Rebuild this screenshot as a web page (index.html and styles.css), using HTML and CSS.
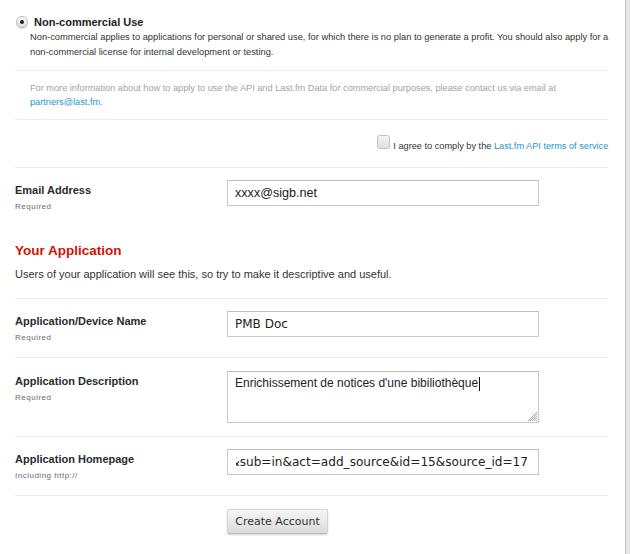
FILE: index.html
```html
<!DOCTYPE html>
<html>
<head>
<meta charset="utf-8">
<title>Create API account</title>
<link rel="stylesheet" href="styles.css">
</head>
<body>
<div class="page">
  <main class="main">
    <section class="block license">
      <div class="radio-row">
        <span class="radio"><span class="radio-dot"></span></span>
        <span class="radio-label">Non-commercial Use</span>
      </div>
      <p class="license-desc">Non-commercial applies to applications for personal or shared use, for which there is no plan to generate a profit. You should also apply for a<br>non-commercial license for internal development or testing.</p>
    </section>

    <section class="block info">
      <p>For more information about how to apply to use the API and Last.fm Data for commercial purposes, please contact us via email at<br><a href="#" class="link">partners@last.fm</a>.</p>
    </section>

    <section class="block agree">
      <span class="checkbox"></span>
      <span class="agree-text">I agree to comply by the <a href="#" class="link">Last.fm API terms of service</a></span>
    </section>

    <section class="row">
      <div class="label-col">
        <div class="label">Email Address</div>
        <div class="hint">Required</div>
      </div>
      <div class="field-col">
        <input class="input input-email" type="text" value="xxxx@sigb.net">
      </div>
    </section>

    <section class="app-head">
      <h2 class="app-title">Your Application</h2>
      <p class="app-desc">Users of your application will see this, so try to make it descriptive and useful.</p>
    </section>

    <section class="row bordered">
      <div class="label-col">
        <div class="label">Application/Device Name</div>
        <div class="hint">Required</div>
      </div>
      <div class="field-col">
        <input class="input" type="text" value="PMB Doc">
      </div>
    </section>

    <section class="row bordered textarea-row">
      <div class="label-col">
        <div class="label">Application Description</div>
        <div class="hint">Required</div>
      </div>
      <div class="field-col">
        <div class="textarea-wrap">
          <textarea class="textarea">Enrichissement de notices d'une bibiliothèque</textarea>
          <span class="caret"></span>
          <svg class="grip" width="9" height="9" viewBox="0 0 9 9">
            <g fill="#a8a8a8">
              <rect x="8" y="0" width="1" height="1"/>
              <rect x="7" y="1" width="1" height="1"/>
              <rect x="6" y="2" width="1" height="1"/><rect x="8" y="2" width="1" height="1"/>
              <rect x="5" y="3" width="1" height="1"/><rect x="7" y="3" width="1" height="1"/>
              <rect x="4" y="4" width="1" height="1"/><rect x="6" y="4" width="1" height="1"/><rect x="8" y="4" width="1" height="1"/>
              <rect x="3" y="5" width="1" height="1"/><rect x="5" y="5" width="1" height="1"/><rect x="7" y="5" width="1" height="1"/>
              <rect x="2" y="6" width="1" height="1"/><rect x="4" y="6" width="1" height="1"/><rect x="6" y="6" width="1" height="1"/><rect x="8" y="6" width="1" height="1"/>
              <rect x="1" y="7" width="1" height="1"/><rect x="3" y="7" width="1" height="1"/><rect x="5" y="7" width="1" height="1"/><rect x="7" y="7" width="1" height="1"/>
              <rect x="0" y="8" width="1" height="1"/><rect x="2" y="8" width="1" height="1"/><rect x="4" y="8" width="1" height="1"/><rect x="6" y="8" width="1" height="1"/><rect x="8" y="8" width="1" height="1"/>
            </g>
          </svg>
        </div>
      </div>
    </section>

    <section class="row bordered">
      <div class="label-col">
        <div class="label">Application Homepage</div>
        <div class="hint">Including http://</div>
      </div>
      <div class="field-col">
        <div class="input fake-input"><div class="scroll-text"><span>=3&amp;sub=in&amp;act=add_source&amp;id=15&amp;source_id=17</span></div></div>
      </div>
    </section>

    <section class="row bordered submit-row">
      <div class="label-col"></div>
      <div class="field-col">
        <button class="button" type="button">Create Account</button>
      </div>
    </section>
  </main>
  <aside class="scrollbar"></aside>
</div>
</body>
</html>
```

FILE: styles.css
```css
html, body {
  margin: 0;
  padding: 0;
  background: #ffffff;
}

body {
  font-family: "Liberation Sans", Arial, sans-serif;
  color: #333333;
}

.page {
  display: flex;
  min-height: 554px;
  width: 630px;
}

.main {
  flex: 1;
  padding-left: 15px;
  padding-right: 17px;
}

.scrollbar {
  width: 4px;
  border-left: 1px solid #c9c9c9;
  background: #e6e6e6;
}

p {
  margin: 0;
}

.link {
  color: #2596d2;
  text-decoration: none;
}

.block {
  border-bottom: 1px solid #ececec;
}

/* license option */
.license {
  padding: 14px 0 10px;
}

.radio-row {
  display: flex;
  align-items: center;
  height: 16px;
}

.radio {
  box-sizing: border-box;
  width: 12px;
  height: 12px;
  margin-left: 1px;
  margin-right: 6px;
  border-radius: 50%;
  border: 1px solid #b9b9b9;
  background: linear-gradient(#ffffff, #dcdcdc);
  box-shadow: 0 1px 1px rgba(0,0,0,0.15);
  display: flex;
  align-items: center;
  justify-content: center;
}

.radio-dot {
  width: 4px;
  height: 4px;
  border-radius: 50%;
  background: #222222;
}

.radio-label {
  font-weight: bold;
  font-size: 11px;
  line-height: 16px;
  color: #222222;
}

.license-desc {
  padding-left: 15px;
  font-size: 9.3px;
  line-height: 15px;
  color: #333333;
  white-space: nowrap;
}

/* info */
.info {
  padding: 10px 0 10px 15px;
}

.info p {
  font-size: 9.2px;
  line-height: 14px;
  color: #a3a3a3;
}

/* agree */
.agree {
  display: flex;
  justify-content: flex-end;
  align-items: flex-start;
  padding: 15px 0 14px;
}

.checkbox {
  box-sizing: border-box;
  width: 13px;
  height: 14px;
  border: 1px solid #c2c2c2;
  border-radius: 3px;
  background: linear-gradient(#f6f6f6, #dedede);
  margin-right: 3px;
}

.agree-text {
  margin-top: 4px;
  font-size: 9.2px;
  line-height: 14px;
  color: #333333;
}

/* form rows */
.row {
  display: grid;
  grid-template-columns: 212px 1fr;
  padding: 12px 0 13px;
}

.bordered {
  border-top: 1px solid #ececec;
}

.textarea-row {
  padding-top: 13px;
}

.label {
  font-weight: bold;
  font-size: 11px;
  line-height: 20px;
  color: #2b2b2b;
}

.hint {
  font-size: 8px;
  line-height: 13px;
  letter-spacing: 0.5px;
  color: #6a6a6a;
}

.input {
  box-sizing: border-box;
  width: 312px;
  height: 26px;
  margin: 0;
  padding: 0 7px;
  border: 1px solid #c8c8c8;
  border-top-color: #bdbdbd;
  background: #ffffff;
  font-family: "DejaVu Sans", sans-serif;
  font-size: 12px;
  color: #222222;
  outline: none;
}

.input-email {
  font-family: "Liberation Sans", Arial, sans-serif;
  font-size: 12.6px;
}

.fake-input {
  display: flex;
  align-items: center;
  padding: 0 10px 0 8px;
  font-size: 12.1px;
}

.scroll-text {
  flex: 1;
  overflow: hidden;
  display: flex;
  justify-content: flex-end;
  white-space: nowrap;
}

.textarea-wrap {
  position: relative;
  width: 312px;
  height: 52px;
}

.textarea {
  box-sizing: border-box;
  display: block;
  width: 312px;
  height: 52px;
  margin: 0;
  padding: 4px 7px;
  border: 1px solid #c8c8c8;
  border-top-color: #bdbdbd;
  background: #ffffff;
  font-family: "Liberation Sans", Arial, sans-serif;
  font-size: 12px;
  line-height: 15px;
  color: #222222;
  resize: none;
  outline: none;
}

.caret {
  position: absolute;
  left: 252px;
  top: 6px;
  width: 1px;
  height: 14px;
  background: #111111;
}

.grip {
  position: absolute;
  right: 2px;
  bottom: 2px;
  display: block;
}

/* submit */
.submit-row {
  padding: 13px 0 20px;
}

.button {
  box-sizing: border-box;
  width: 101px;
  height: 25px;
  padding: 0;
  border: 1px solid #d4d4d4;
  border-bottom-color: #bdbdbd;
  border-radius: 2px;
  background: linear-gradient(#f6f6f6, #dadada);
  box-shadow: 0 1px 2px rgba(0,0,0,0.18);
  font-family: "DejaVu Sans", sans-serif;
  font-size: 11px;
  color: #333333;
}

/* application header */
.app-head {
  padding: 16px 0 16px;
}

.app-title {
  margin: 0 0 6px;
  font-size: 13.5px;
  line-height: 18px;
  font-weight: bold;
  color: #d51007;
}

.app-desc {
  font-size: 11px;
  line-height: 16px;
  color: #333333;
}
```
